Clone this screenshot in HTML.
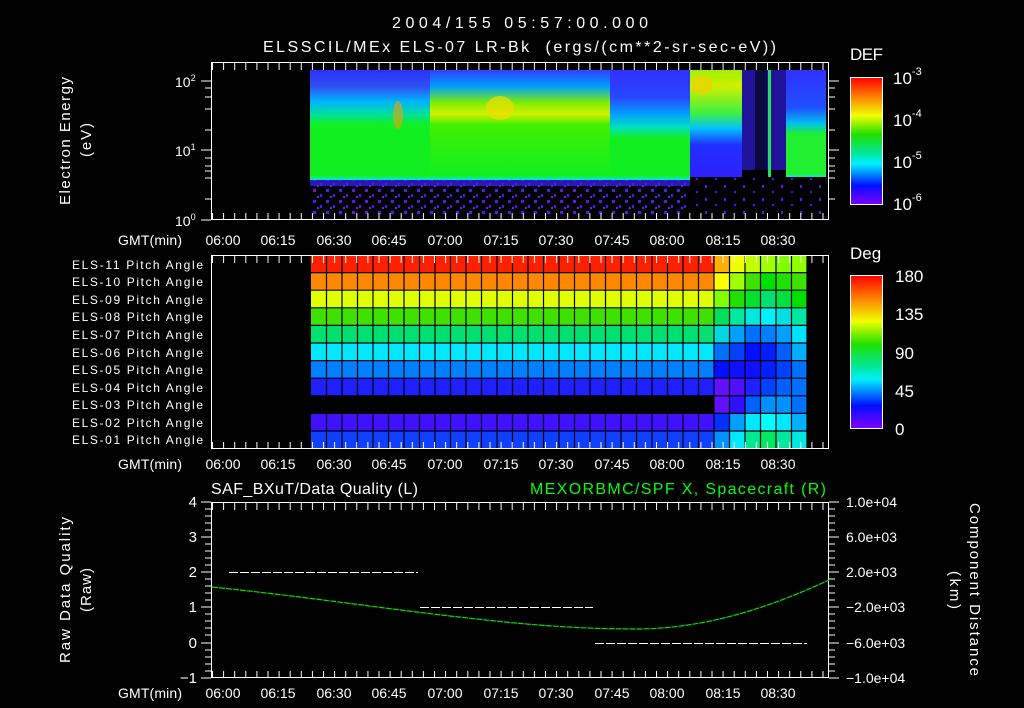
<!DOCTYPE html>
<html><head><meta charset="utf-8"><style>
html,body{margin:0;padding:0;background:#000;}
svg{display:block;font-family:"Liberation Sans",sans-serif;}
</style></head><body>
<svg width="1024" height="708" viewBox="0 0 1024 708" xmlns="http://www.w3.org/2000/svg">
<defs>
<linearGradient id="cbar" x1="0" y1="0" x2="0" y2="1">
<stop offset="0" stop-color="#ff0000"/><stop offset="0.15" stop-color="#ff8000"/><stop offset="0.3" stop-color="#f0ff00"/><stop offset="0.45" stop-color="#20e000"/><stop offset="0.6" stop-color="#00e8a0"/><stop offset="0.68" stop-color="#00f0ff"/><stop offset="0.85" stop-color="#0010ff"/><stop offset="1" stop-color="#8000ff"/>
</linearGradient>
<linearGradient id="specL" x1="0" y1="0" x2="0" y2="1">
<stop offset="0" stop-color="#2830ff"/><stop offset="0.15" stop-color="#3050f0"/><stop offset="0.28" stop-color="#00b0ff"/><stop offset="0.4" stop-color="#00e0a0"/><stop offset="0.5" stop-color="#10f020"/><stop offset="0.96" stop-color="#10f020"/><stop offset="1" stop-color="#00e8e0"/>
</linearGradient>
<linearGradient id="specM" x1="0" y1="0" x2="0" y2="1">
<stop offset="0" stop-color="#3040ff"/><stop offset="0.15" stop-color="#00a0ff"/><stop offset="0.3" stop-color="#80f000"/><stop offset="0.4" stop-color="#d0f000"/><stop offset="0.5" stop-color="#40f000"/><stop offset="0.96" stop-color="#10f020"/><stop offset="1" stop-color="#00e8e0"/>
</linearGradient>
<linearGradient id="specR" x1="0" y1="0" x2="0" y2="1">
<stop offset="0" stop-color="#3030ff"/><stop offset="0.25" stop-color="#2848ff"/><stop offset="0.4" stop-color="#00a0ff"/><stop offset="0.52" stop-color="#00e0c0"/><stop offset="0.62" stop-color="#10f020"/><stop offset="0.96" stop-color="#10f020"/><stop offset="1" stop-color="#00e8e0"/>
</linearGradient>
<linearGradient id="specA" x1="0" y1="0" x2="0" y2="1">
<stop offset="0" stop-color="#a0f000"/><stop offset="0.15" stop-color="#d0f000"/><stop offset="0.4" stop-color="#40f040"/><stop offset="0.55" stop-color="#00c0ff"/><stop offset="0.7" stop-color="#2030ff"/><stop offset="1" stop-color="#3020ff"/>
</linearGradient>
<linearGradient id="specB" x1="0" y1="0" x2="0" y2="1">
<stop offset="0" stop-color="#3030ff"/><stop offset="0.35" stop-color="#2050ff"/><stop offset="0.5" stop-color="#00c0f0"/><stop offset="0.6" stop-color="#20f030"/><stop offset="0.97" stop-color="#20f030"/><stop offset="1" stop-color="#00e8e0"/>
</linearGradient>
<pattern id="speck" width="13" height="11" patternUnits="userSpaceOnUse">
<rect x="1" y="2" width="3" height="3" fill="#6010ff"/><rect x="8" y="7" width="2" height="3" fill="#5010ff"/><rect x="5" y="9" width="2" height="2" fill="#7020ff"/>
</pattern>
<pattern id="speck2" width="19" height="13" patternUnits="userSpaceOnUse">
<rect x="2" y="3" width="2" height="3" fill="#6010ff"/><rect x="12" y="9" width="2" height="2" fill="#5010ff"/>
</pattern>
<pattern id="mtick" x="212" width="11.1" height="8" patternUnits="userSpaceOnUse">
<rect x="0" y="0" width="1" height="8" fill="#fff"/>
</pattern>
</defs>

<text x="392" y="28" fill="#fff" font-size="16" textLength="256" lengthAdjust="spacing">2004/155 05:57:00.000</text>
<text x="263" y="52" fill="#fff" font-size="16" textLength="513" lengthAdjust="spacing" xml:space="preserve">ELSSCIL/MEx ELS-07 LR-Bk  (ergs/(cm**2-sr-sec-eV))</text>

<!-- Panel 1 spectrogram -->
<rect x="310" y="70" width="120" height="110" fill="url(#specL)"/>
<rect x="430" y="70" width="180" height="110" fill="url(#specM)"/>
<rect x="610" y="70" width="80" height="110" fill="url(#specR)"/>
<rect x="690" y="70" width="52" height="107" fill="url(#specA)"/>
<rect x="742" y="70" width="44" height="100" fill="#2818c0" opacity="0.8"/>
<rect x="755" y="70" width="12" height="108" fill="#000" opacity="0.6"/>
<rect x="768" y="70" width="3" height="107" fill="#20e060"/>
<rect x="786" y="70" width="40" height="107" fill="url(#specB)"/>
<rect x="310" y="180" width="380" height="35" fill="url(#speck)"/>
<rect x="690" y="177" width="136" height="38" fill="url(#speck2)"/>
<rect x="310" y="180" width="380" height="6" fill="#4020ff" opacity="0.7"/>
<ellipse cx="500" cy="108" rx="14" ry="12" fill="#f0e000" opacity="0.7"/>
<ellipse cx="398" cy="115" rx="5" ry="14" fill="#f0a000" opacity="0.6"/>
<ellipse cx="702" cy="85" rx="10" ry="10" fill="#f0d000" opacity="0.7"/>

<!-- Panel 1 frame -->
<rect x="211.5" y="62.5" width="617" height="157" fill="none" stroke="#fff"/>
<rect x="212" y="63" width="617" height="7" fill="url(#mtick)"/>
<rect x="212" y="213" width="617" height="7" fill="url(#mtick)"/>
<g stroke="#fff">
<path d="M201 81H211M201 150H211M201 220H211M205 88H211M205 97H211M205 109H211M205 130H211M205 171H211M205 199H211M205 158H211M205 166H211M205 178H211"/>
<path d="M829 81H839M829 150H839M829 88H835M829 97H835M829 109H835M829 130H835M829 171H835M829 199H835M829 158H835M829 166H835M829 178H835"/>
</g>
<g fill="#fff" font-size="14">
<text x="175" y="87">10<tspan font-size="9" dy="-6">2</tspan></text>
<text x="175" y="156">10<tspan font-size="9" dy="-6">1</tspan></text>
<text x="175" y="226">10<tspan font-size="9" dy="-6">0</tspan></text>
</g>
<g fill="#fff" font-size="15">
<text transform="translate(70,205) rotate(-90)" textLength="128" lengthAdjust="spacing">Electron Energy</text>
<text transform="translate(91,157) rotate(-90)" textLength="34" lengthAdjust="spacing">(eV)</text>
</g>
<!-- DEF colorbar -->
<text x="850" y="60" fill="#fff" font-size="17" textLength="33" lengthAdjust="spacing">DEF</text>
<rect x="850.5" y="77.5" width="32" height="127" fill="url(#cbar)" stroke="#fff"/>
<g fill="#fff" font-size="17">
<text x="893" y="84">10<tspan font-size="11" dy="-9">-3</tspan></text>
<text x="893" y="126">10<tspan font-size="11" dy="-9">-4</tspan></text>
<text x="893" y="168">10<tspan font-size="11" dy="-9">-5</tspan></text>
<text x="893" y="210">10<tspan font-size="11" dy="-9">-6</tspan></text>
</g>

<!-- Time labels -->
<g fill="#fff" font-size="14" text-anchor="middle">
<text x="150" y="245" textLength="64" lengthAdjust="spacing">GMT(min)</text>
<text x="223" y="245">06:00</text><text x="278" y="245">06:15</text><text x="334" y="245">06:30</text><text x="389" y="245">06:45</text><text x="445" y="245">07:00</text><text x="501" y="245">07:15</text><text x="556" y="245">07:30</text><text x="612" y="245">07:45</text><text x="667" y="245">08:00</text><text x="723" y="245">08:15</text><text x="778" y="245">08:30</text>
<text x="150" y="469" textLength="64" lengthAdjust="spacing">GMT(min)</text>
<text x="223" y="469">06:00</text><text x="278" y="469">06:15</text><text x="334" y="469">06:30</text><text x="389" y="469">06:45</text><text x="445" y="469">07:00</text><text x="501" y="469">07:15</text><text x="556" y="469">07:30</text><text x="612" y="469">07:45</text><text x="667" y="469">08:00</text><text x="723" y="469">08:15</text><text x="778" y="469">08:30</text>
<text x="150" y="698" textLength="64" lengthAdjust="spacing">GMT(min)</text>
<text x="223" y="698">06:00</text><text x="278" y="698">06:15</text><text x="334" y="698">06:30</text><text x="389" y="698">06:45</text><text x="445" y="698">07:00</text><text x="501" y="698">07:15</text><text x="556" y="698">07:30</text><text x="612" y="698">07:45</text><text x="667" y="698">08:00</text><text x="723" y="698">08:15</text><text x="778" y="698">08:30</text>
</g>

<!-- Panel 2 cells -->
<g>
<rect x="311" y="255" width="403" height="17.6" fill="#ff2000"/>
<rect x="311" y="272.6" width="403" height="17.6" fill="#ff8800"/>
<rect x="311" y="290.2" width="403" height="17.6" fill="#e0ff00"/>
<rect x="311" y="307.8" width="403" height="17.6" fill="#40e000"/>
<rect x="311" y="325.4" width="403" height="17.6" fill="#00e070"/>
<rect x="311" y="343" width="403" height="17.6" fill="#00e8ff"/>
<rect x="311" y="360.6" width="403" height="17.6" fill="#0080ff"/>
<rect x="311" y="378.2" width="403" height="17.6" fill="#2020ff"/>
<rect x="311" y="413.4" width="403" height="17.6" fill="#4010ff"/>
<rect x="311" y="431" width="403" height="18" fill="#1040ff"/>
</g>
<g>
<rect x="714" y="255" width="15.5" height="17.6" fill="#ffb000"/><rect x="729.5" y="255" width="15.5" height="17.6" fill="#f0ff00"/><rect x="745" y="255" width="15.5" height="17.6" fill="#c0ff00"/><rect x="760.5" y="255" width="15.5" height="17.6" fill="#a0ff00"/><rect x="776" y="255" width="15.5" height="17.6" fill="#80ff00"/><rect x="791.5" y="255" width="15.5" height="17.6" fill="#90ff00"/>
<rect x="714" y="272.6" width="15.5" height="17.6" fill="#ffff00"/><rect x="729.5" y="272.6" width="15.5" height="17.6" fill="#a0ff00"/><rect x="745" y="272.6" width="15.5" height="17.6" fill="#40e000"/><rect x="760.5" y="272.6" width="15.5" height="17.6" fill="#00e000"/><rect x="776" y="272.6" width="15.5" height="17.6" fill="#20e000"/><rect x="791.5" y="272.6" width="15.5" height="17.6" fill="#40e000"/>
<rect x="714" y="290.2" width="15.5" height="17.6" fill="#80ff00"/><rect x="729.5" y="290.2" width="15.5" height="17.6" fill="#20e000"/><rect x="745" y="290.2" width="15.5" height="17.6" fill="#00e030"/><rect x="760.5" y="290.2" width="15.5" height="17.6" fill="#00e070"/><rect x="776" y="290.2" width="15.5" height="17.6" fill="#00e040"/><rect x="791.5" y="290.2" width="15.5" height="17.6" fill="#00e000"/>
<rect x="714" y="307.8" width="15.5" height="17.6" fill="#00e060"/><rect x="729.5" y="307.8" width="15.5" height="17.6" fill="#00e8a0"/><rect x="745" y="307.8" width="15.5" height="17.6" fill="#00e8e0"/><rect x="760.5" y="307.8" width="15.5" height="17.6" fill="#00f0ff"/><rect x="776" y="307.8" width="15.5" height="17.6" fill="#00e0e0"/><rect x="791.5" y="307.8" width="15.5" height="17.6" fill="#00e8a0"/>
<rect x="714" y="325.4" width="15.5" height="17.6" fill="#00d8e0"/><rect x="729.5" y="325.4" width="15.5" height="17.6" fill="#00a0ff"/><rect x="745" y="325.4" width="15.5" height="17.6" fill="#0070ff"/><rect x="760.5" y="325.4" width="15.5" height="17.6" fill="#0080ff"/><rect x="776" y="325.4" width="15.5" height="17.6" fill="#00a0ff"/><rect x="791.5" y="325.4" width="15.5" height="17.6" fill="#00e0ff"/>
<rect x="714" y="343" width="15.5" height="17.6" fill="#0070ff"/><rect x="729.5" y="343" width="15.5" height="17.6" fill="#0040ff"/><rect x="745" y="343" width="15.5" height="17.6" fill="#0010ff"/><rect x="760.5" y="343" width="15.5" height="17.6" fill="#0020ff"/><rect x="776" y="343" width="15.5" height="17.6" fill="#0060ff"/><rect x="791.5" y="343" width="15.5" height="17.6" fill="#00b0ff"/>
<rect x="714" y="360.6" width="15.5" height="17.6" fill="#0010ff"/><rect x="729.5" y="360.6" width="15.5" height="17.6" fill="#1010ff"/><rect x="745" y="360.6" width="15.5" height="17.6" fill="#1010ff"/><rect x="760.5" y="360.6" width="15.5" height="17.6" fill="#0020ff"/><rect x="776" y="360.6" width="15.5" height="17.6" fill="#0040ff"/><rect x="791.5" y="360.6" width="15.5" height="17.6" fill="#0070ff"/>
<rect x="714" y="378.2" width="15.5" height="17.6" fill="#6010ff"/><rect x="729.5" y="378.2" width="15.5" height="17.6" fill="#5010ff"/><rect x="745" y="378.2" width="15.5" height="17.6" fill="#2020ff"/><rect x="760.5" y="378.2" width="15.5" height="17.6" fill="#0040ff"/><rect x="776" y="378.2" width="15.5" height="17.6" fill="#0060ff"/><rect x="791.5" y="378.2" width="15.5" height="17.6" fill="#0070ff"/>
<rect x="714" y="395.8" width="15.5" height="17.6" fill="#6010ff"/><rect x="729.5" y="395.8" width="15.5" height="17.6" fill="#3010ff"/><rect x="745" y="395.8" width="15.5" height="17.6" fill="#0060ff"/><rect x="760.5" y="395.8" width="15.5" height="17.6" fill="#0090ff"/><rect x="776" y="395.8" width="15.5" height="17.6" fill="#0090ff"/><rect x="791.5" y="395.8" width="15.5" height="17.6" fill="#0070ff"/>
<rect x="714" y="413.4" width="15.5" height="17.6" fill="#0030ff"/><rect x="729.5" y="413.4" width="15.5" height="17.6" fill="#00a0ff"/><rect x="745" y="413.4" width="15.5" height="17.6" fill="#00e8ff"/><rect x="760.5" y="413.4" width="15.5" height="17.6" fill="#00ffff"/><rect x="776" y="413.4" width="15.5" height="17.6" fill="#00e8ff"/><rect x="791.5" y="413.4" width="15.5" height="17.6" fill="#00b0ff"/>
<rect x="714" y="431" width="15.5" height="18" fill="#0090ff"/><rect x="729.5" y="431" width="15.5" height="18" fill="#00e8ff"/><rect x="745" y="431" width="15.5" height="18" fill="#00e890"/><rect x="760.5" y="431" width="15.5" height="18" fill="#00e860"/><rect x="776" y="431" width="15.5" height="18" fill="#00e8a0"/><rect x="791.5" y="431" width="15.5" height="18" fill="#00e8e0"/>
</g>
<g stroke="#000" stroke-width="1.2">
<path d="M311 272.6H807M311 290.2H807M311 307.8H807M311 325.4H807M311 343H807M311 360.6H807M311 378.2H807M311 395.8H807M311 413.4H807M311 431H807"/>
<path d="M326.5 255V449M342 255V449M357.5 255V449M373 255V449M388.5 255V449M404 255V449M419.5 255V449M435 255V449M450.5 255V449M466 255V449M481.5 255V449M497 255V449M512.5 255V449M528 255V449M543.5 255V449M559 255V449M574.5 255V449M590 255V449M605.5 255V449M621 255V449M636.5 255V449M652 255V449M667.5 255V449M683 255V449M698.5 255V449M714 255V449M729.5 255V449M745 255V449M760.5 255V449M776 255V449M791.5 255V449M807 255V449"/>
</g>
<rect x="211.5" y="255.5" width="617" height="193" fill="none" stroke="#fff"/>
<rect x="212" y="256" width="617" height="7" fill="url(#mtick)"/>
<rect x="212" y="442" width="617" height="7" fill="url(#mtick)"/>
<g fill="#fff" font-size="12">
<text x="72" y="269" textLength="131" lengthAdjust="spacing">ELS-11 Pitch Angle</text>
<text x="72" y="286" textLength="131" lengthAdjust="spacing">ELS-10 Pitch Angle</text>
<text x="72" y="304" textLength="131" lengthAdjust="spacing">ELS-09 Pitch Angle</text>
<text x="72" y="321" textLength="131" lengthAdjust="spacing">ELS-08 Pitch Angle</text>
<text x="72" y="339" textLength="131" lengthAdjust="spacing">ELS-07 Pitch Angle</text>
<text x="72" y="357" textLength="131" lengthAdjust="spacing">ELS-06 Pitch Angle</text>
<text x="72" y="374" textLength="131" lengthAdjust="spacing">ELS-05 Pitch Angle</text>
<text x="72" y="392" textLength="131" lengthAdjust="spacing">ELS-04 Pitch Angle</text>
<text x="72" y="409" textLength="131" lengthAdjust="spacing">ELS-03 Pitch Angle</text>
<text x="72" y="427" textLength="131" lengthAdjust="spacing">ELS-02 Pitch Angle</text>
<text x="72" y="444" textLength="131" lengthAdjust="spacing">ELS-01 Pitch Angle</text>
</g>
<!-- Deg colorbar -->
<text x="850" y="259" fill="#fff" font-size="17">Deg</text>
<rect x="850.5" y="275.5" width="32" height="153" fill="url(#cbar)" stroke="#fff"/>
<g fill="#fff" font-size="17">
<text x="895" y="282">180</text><text x="895" y="320">135</text><text x="895" y="359">90</text><text x="895" y="397">45</text><text x="895" y="435">0</text>
</g>

<!-- Panel 3 -->
<text x="211" y="494" fill="#fff" font-size="16" textLength="207" lengthAdjust="spacing">SAF_BXuT/Data Quality (L)</text>
<text x="530" y="494" fill="#00ff00" font-size="16" textLength="296" lengthAdjust="spacing">MEXORBMC/SPF X, Spacecraft (R)</text>
<rect x="211.5" y="502.5" width="617" height="175" fill="none" stroke="#fff"/>
<rect x="212" y="503" width="617" height="7" fill="url(#mtick)"/>
<rect x="212" y="671" width="617" height="7" fill="url(#mtick)"/>
<g stroke="#fff">
<path d="M201 502H211M201 537H211M201 572H211M201 607H211M201 643H211M201 678H211M205 509H211M205 516H211M205 523H211M205 530H211M205 544H211M205 551H211M205 558H211M205 565H211M205 579H211M205 586H211M205 593H211M205 600H211M205 614H211M205 621H211M205 628H211M205 635H211M205 650H211M205 657H211M205 664H211M205 671H211"/>
<path d="M829 502H839M829 537H839M829 572H839M829 607H839M829 643H839M829 678H839M829 509H835M829 516H835M829 523H835M829 530H835M829 544H835M829 551H835M829 558H835M829 565H835M829 579H835M829 586H835M829 593H835M829 600H835M829 614H835M829 621H835M829 628H835M829 635H835M829 650H835M829 657H835M829 664H835M829 671H835"/>
</g>
<g fill="#fff" font-size="15" text-anchor="end">
<text x="197" y="507">4</text><text x="197" y="542">3</text><text x="197" y="577">2</text><text x="197" y="612">1</text><text x="197" y="648">0</text><text x="197" y="683">−1</text>
</g>
<g fill="#fff" font-size="14">
<text x="846" y="507">1.0e+04</text><text x="846" y="542">6.0e+03</text><text x="846" y="577">2.0e+03</text><text x="846" y="612">−2.0e+03</text><text x="846" y="648">−6.0e+03</text><text x="846" y="683">−1.0e+04</text>
</g>
<g stroke="#fff" stroke-width="1" stroke-dasharray="9,2">
<path d="M229 572.5H418M420 607.5H593M595 643.5H807"/>
</g>
<path d="M212 587 C300 596 380 608 450 616 C520 624 570 629 640 629 C700 628 760 612 829 580" fill="none" stroke="#00e000" stroke-width="1.2" stroke-dasharray="6,1"/>
<g fill="#fff" font-size="15">
<text transform="translate(70,663) rotate(-90)" textLength="146" lengthAdjust="spacing">Raw Data Quality</text>
<text transform="translate(91,612) rotate(-90)" textLength="44" lengthAdjust="spacing">(Raw)</text>
<text transform="translate(970,503) rotate(90)" textLength="173" lengthAdjust="spacing">Component Distance</text>
<text transform="translate(950,571) rotate(90)" textLength="38" lengthAdjust="spacing">(km)</text>
</g>
</svg>
</body></html>
